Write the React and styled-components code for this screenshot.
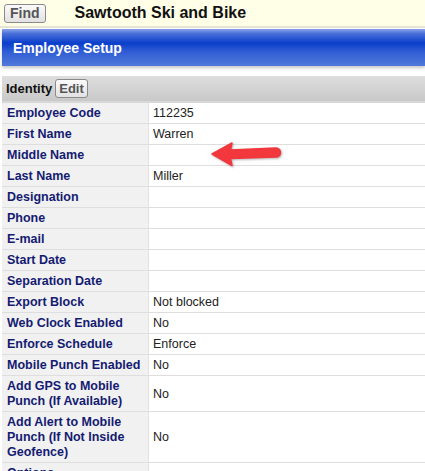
import styled, { createGlobalStyle } from "styled-components";

const GlobalStyle = createGlobalStyle`
  html, body {
    margin: 0;
    padding: 0;
    background: #ffffff;
    font-family: "Liberation Sans", Arial, sans-serif;
  }
`;

const Page = styled.div`
  width: 425px;
  height: 471px;
  overflow: hidden;
  background: #fff;
`;

const TopBar = styled.div`
  height: 26px;
  display: flex;
  align-items: center;
  gap: 29px;
  padding-left: 4px;
  background: #fffee6;
  border-bottom: 2px solid #e6e4d2;
`;

const SmallButton = styled.button`
  font-family: "Liberation Sans", Arial, sans-serif;
  font-size: ${(p) => p.$size || 13}px;
  font-weight: bold;
  color: #555;
  height: ${(p) => p.$height || 19}px;
  padding: 0 ${(p) => p.$pad || 5}px;
  border: 1px solid #8a8a8a;
  border-radius: 3px;
  background: linear-gradient(#fafafa, #e2e2e2);
  line-height: 1;
  cursor: pointer;
`;

const Company = styled.h1`
  margin: 0;
  font-size: 16px;
  font-weight: bold;
  color: #111;
`;

const Banner = styled.div`
  margin: 1px 0 0 2px;
  height: 37px;
  display: flex;
  align-items: center;
  padding-left: 11px;
  background: linear-gradient(
    #8aa3e8 0%,
    #4b71d9 12%,
    #0a3ecb 38%,
    #2f5cd4 60%,
    #5079da 100%
  );
  box-shadow: 0 2px 3px rgba(0, 0, 0, 0.22);
`;

const BannerTitle = styled.h2`
  margin: 0;
  font-size: 14px;
  font-weight: bold;
  color: #fff;
`;

const Section = styled.div`
  margin: 10px 0 0 2px;
`;

const SectionHeader = styled.div`
  height: 25px;
  display: flex;
  align-items: center;
  gap: 3px;
  padding-left: 4px;
  background: linear-gradient(#dedede, #c9c9c9);
  border-bottom: 2px solid #d8d8d8;
`;

const SectionTitle = styled.span`
  font-size: 13px;
  font-weight: bold;
  color: #111;
`;

const Table = styled.table`
  width: 100%;
  border-collapse: collapse;
  font-size: 12.5px;
`;

const Row = styled.tr`
  border-bottom: 1px solid #dedede;
`;

const Label = styled.th`
  width: 136px;
  padding: 3px 5px 2px 5px;
  text-align: left;
  vertical-align: middle;
  font-weight: bold;
  color: #141b72;
  background: #f1f1f1;
  border-right: 1px solid #e2e2e2;
  line-height: 15px;
  height: 15px;
`;

const Value = styled.td`
  padding: 3px 5px 2px 4px;
  color: #222;
  vertical-align: middle;
  line-height: 15px;
  position: relative;
`;

const Arrow = styled.svg`
  position: absolute;
  left: 62px;
  top: -3px;
  overflow: visible;
  filter: drop-shadow(1px 1px 1px rgba(0, 0, 0, 0.3));
`;

const rows = [
  ["Employee Code", "112235"],
  ["First Name", "Warren"],
  ["Middle Name", "", true],
  ["Last Name", "Miller"],
  ["Designation", ""],
  ["Phone", ""],
  ["E-mail", ""],
  ["Start Date", ""],
  ["Separation Date", ""],
  ["Export Block", "Not blocked"],
  ["Web Clock Enabled", "No"],
  ["Enforce Schedule", "Enforce"],
  ["Mobile Punch Enabled", "No"],
  [["Add GPS to Mobile", "Punch (If Available)"], "No"],
  [["Add Alert to Mobile", "Punch (If Not Inside", "Geofence)"], "No"],
  ["Options", ""],
];

export default function App() {
  return (
    <Page>
      <GlobalStyle />
      <TopBar>
        <SmallButton $size={14} $height={19} $pad={5}>Find</SmallButton>
        <Company>Sawtooth Ski and Bike</Company>
      </TopBar>
      <Banner>
        <BannerTitle>Employee Setup</BannerTitle>
      </Banner>
      <Section>
        <SectionHeader>
          <SectionTitle>Identity</SectionTitle>
          <SmallButton $height={19} $pad={3}>Edit</SmallButton>
        </SectionHeader>
        <Table>
          <tbody>
            {rows.map(([label, value, marked], i) => (
              <Row key={i}>
                <Label>
                  {Array.isArray(label)
                    ? label.map((line, j) => <div key={j}>{line}</div>)
                    : label}
                </Label>
                <Value>
                  {value}
                  {marked && (
                    <Arrow width="70" height="24" viewBox="0 0 70 24">
                      <path
                        d="M1 12 L21 1 L19.5 8 L65 6 A4.5 4.5 0 0 1 65 15 L19.5 16.5 L21 23.5 Z"
                        fill="#f2373d"
                        stroke="#f2373d"
                        strokeLinejoin="round"
                        strokeWidth="1.5"
                      />
                    </Arrow>
                  )}
                </Value>
              </Row>
            ))}
          </tbody>
        </Table>
      </Section>
    </Page>
  );
}
